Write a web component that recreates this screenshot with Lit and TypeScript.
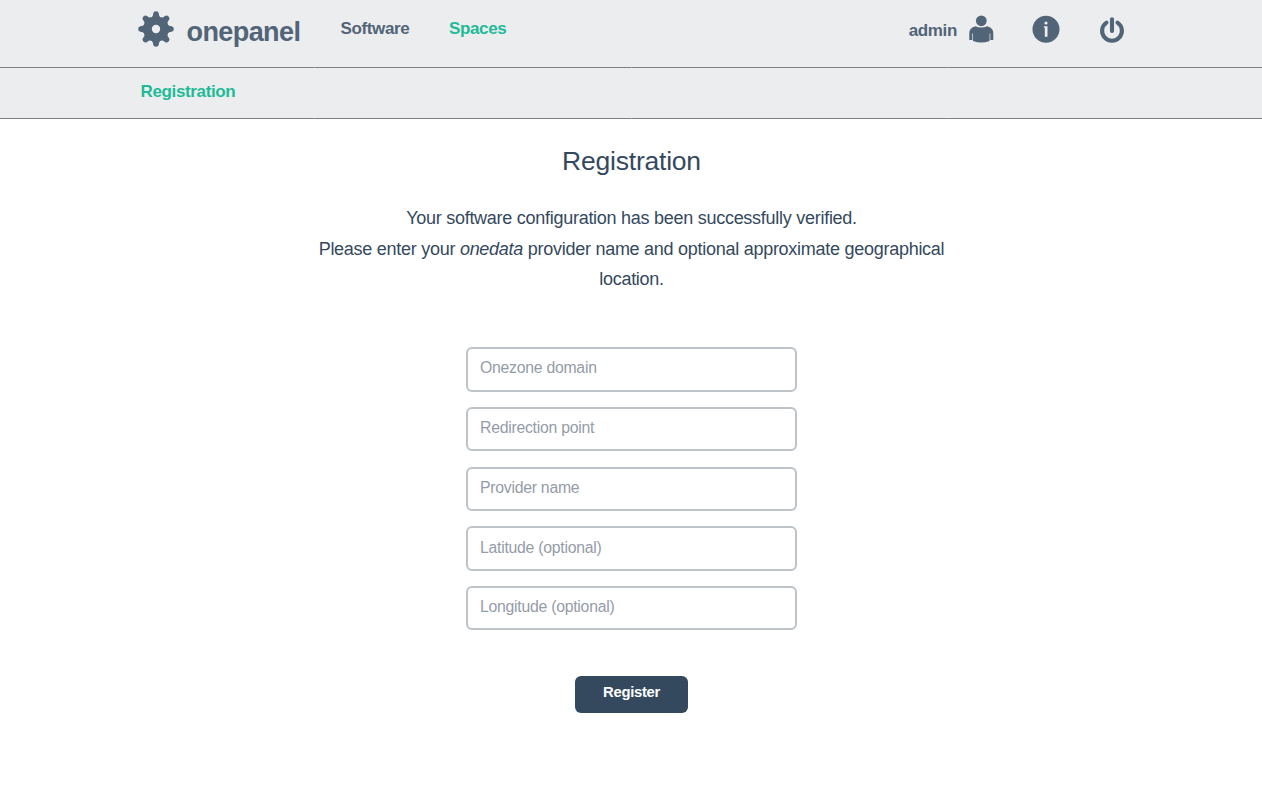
import { LitElement, html, svg, css } from "lit";
import { customElement } from "lit/decorators.js";

@customElement("app-root")
export class AppRoot extends LitElement {
  static styles = css`
    :host {
      display: block;
      height: 786px;
      overflow: hidden;
      background: #fff;
      color: #34495e;
      font-family: "Liberation Sans", Arial, sans-serif;
      box-sizing: border-box;
    }
    * { box-sizing: border-box; }
    .bar {
      display: flex;
      align-items: flex-start;
      justify-content: space-between;
      background: #ecedef;
      border-bottom: 1px solid #7f7f7f;
      border-image: repeating-linear-gradient(90deg, #7f7f7f 0 315px, #a0a0a0 315px 316px) 1;
      padding: 0 137.5px 0 138px;
      color: #526478;
      font-weight: bold;
      font-size: 17px;
      letter-spacing: -0.36px;
      line-height: 20px;
      white-space: nowrap;
    }
    .main { height: 68px; }
    .sub { height: 51px; padding-left: 140.5px; padding-top: 14px; }
    .group { display: flex; align-items: flex-start; }
    .gear { width: 36px; height: 36px; margin-top: 11px; }
    .brand { font-size: 27px; letter-spacing: -0.58px; line-height: 30px; margin: 17px 0 0 12.5px; width: 154px; }
    .link { margin-top: 19px; width: 108.5px; }
    .bar .green { color: #1fbb98; }
    .user { margin: 21px 11.5px 0 0; }
    .person { width: 25px; height: 28px; margin-top: 15px; }
    .info { width: 28px; height: 28px; margin: 15px 0 0 38.5px; }
    .power { width: 26px; height: 28px; margin: 16px 0 0 38.5px; }
    svg { display: block; fill: currentColor; }
    .content { display: flex; flex-direction: column; align-items: center; }
    h1 { margin: 27px 0 0; padding-left: 1px; font-size: 26.5px; letter-spacing: -0.22px; line-height: 30px; font-weight: normal; }
    p { margin: 27px 0 0; padding-left: 1px; width: 640px; text-align: center; font-size: 18px; letter-spacing: -0.27px; line-height: 30.5px; }
    form { display: flex; flex-direction: column; align-items: center; margin-top: 52.8px; gap: 15.4px; }
    input {
      display: block;
      width: 331px;
      height: 44.3px;
      margin: 0;
      border: 2px solid #bdc3c7;
      border-radius: 6px;
      padding: 0 12px 2px 12.5px;
      background: #fff;
      color: #34495e;
      font: 15.8px "Liberation Sans", Arial, sans-serif;
      letter-spacing: -0.26px;
      outline: none;
    }
    input::placeholder { color: #949ca8; opacity: 1; }
    button {
      width: 113px;
      height: 37px;
      margin-top: 30.5px;
      padding: 0 0 5px 7px;
      border: 0;
      border-radius: 6px;
      background: #34495e;
      color: #fff;
      font: bold 14.8px "Liberation Sans", Arial, sans-serif;
      letter-spacing: -0.3px;
      padding-left: 1px;
    }
  `;

  fields = ["Onezone domain", "Redirection point", "Provider name", "Latitude (optional)", "Longitude (optional)"];

  render() {
    return html`
      <header class="bar main">
        <div class="group">
          <svg class="gear" viewBox="-18 -18 36 36">
            <path fill-rule="evenodd" d="M-12.800 0a12.800 12.800 0 1 0 25.600 0a12.800 12.800 0 1 0-25.600 0zM-4.200 0a4.200 4.200 0 1 1 8.400 0a4.200 4.200 0 1 1-8.400 0z"/>
            ${[0, 45, 90, 135, 180, 225, 270, 315].map((a) => svg`<path transform="rotate(${a})" d="M-4.500-11.500Q-2.800-13-2.800-15.500Q-2.600-17.800 0-17.800T2.800-15.500Q2.800-13 4.500-11.500z"/>`)}
          </svg>
          <div class="brand">onepanel</div>
          <div class="link">Software</div>
          <div class="link green">Spaces</div>
        </div>
        <div class="group">
          <div class="user">admin</div>
          <svg class="person" viewBox="0 0 25 28">
            <circle cx="12.300" cy="5.800" r="5.400"/>
            <path d="M6.500 11.300Q12.300 13.800 18.100 11.300Q24.300 12.500 24.300 18.500V25H21.300V18.500H20.600V26Q12.300 29.200 4 26V18.500H3.300V25H.3V18.500Q.3 12.500 6.500 11.300z"/>
          </svg>
          <svg class="info" viewBox="0 0 28 28">
            <path fill-rule="evenodd" d="M.5 14.300a13.500 13.500 0 1 0 27 0a13.500 13.500 0 1 0-27 0zM12.400 8a1.600 1.600 0 1 1 3.200 0a1.600 1.600 0 1 1-3.200 0zM11.800 11.300H15.500V21.800H12.800V12.500H11.800z"/>
          </svg>
          <svg class="power" viewBox="0 0 26 28">
            <path d="M7.500 6.600A9.900 9.900 0 1 0 18.500 6.600M13 3.300V15" fill="none" stroke="currentColor" stroke-width="4.100" stroke-linecap="round"/>
          </svg>
        </div>
      </header>
      <nav class="bar sub"><span class="green">Registration</span></nav>
      <main class="content">
        <h1>Registration</h1>
        <p>Your software configuration has been successfully verified.<br />Please enter your <em>onedata</em> provider name and optional approximate geographical location.</p>
        <form @submit=${(e: Event) => e.preventDefault()}>
          ${this.fields.map((f) => html`<input type="text" placeholder=${f} />`)}
          <button>Register</button>
        </form>
      </main>
    `;
  }
}
